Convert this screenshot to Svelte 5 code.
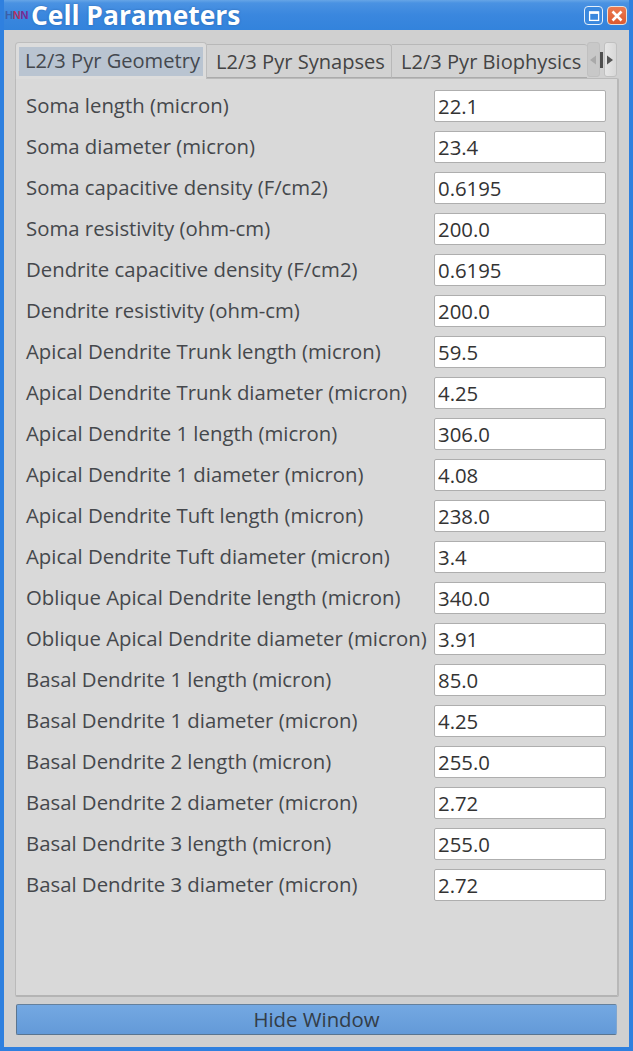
<script>
  const rows = [
    ["Soma length (micron)", "22.1"],
    ["Soma diameter (micron)", "23.4"],
    ["Soma capacitive density (F/cm2)", "0.6195"],
    ["Soma resistivity (ohm-cm)", "200.0"],
    ["Dendrite capacitive density (F/cm2)", "0.6195"],
    ["Dendrite resistivity (ohm-cm)", "200.0"],
    ["Apical Dendrite Trunk length (micron)", "59.5"],
    ["Apical Dendrite Trunk diameter (micron)", "4.25"],
    ["Apical Dendrite 1 length (micron)", "306.0"],
    ["Apical Dendrite 1 diameter (micron)", "4.08"],
    ["Apical Dendrite Tuft length (micron)", "238.0"],
    ["Apical Dendrite Tuft diameter (micron)", "3.4"],
    ["Oblique Apical Dendrite length (micron)", "340.0"],
    ["Oblique Apical Dendrite diameter (micron)", "3.91"],
    ["Basal Dendrite 1 length (micron)", "85.0"],
    ["Basal Dendrite 1 diameter (micron)", "4.25"],
    ["Basal Dendrite 2 length (micron)", "255.0"],
    ["Basal Dendrite 2 diameter (micron)", "2.72"],
    ["Basal Dendrite 3 length (micron)", "255.0"],
    ["Basal Dendrite 3 diameter (micron)", "2.72"]
  ];
</script>

<div class="window">
  <header class="titlebar">
    <div class="logo"><span class="l1">H</span><span class="l2">N</span><span class="l3">N</span></div>
    <div class="title">Cell Parameters</div>
    <div class="winbtns">
      <div class="wb max"><svg width="12" height="12" viewBox="0 0 12 12"><rect x="1.6" y="2" width="9" height="8.4" fill="none" stroke="#fff" stroke-width="1.3"/><rect x="1" y="1.5" width="10" height="2.4" fill="#fff"/></svg></div>
      <div class="wb close"><svg width="12" height="12" viewBox="0 0 12 12"><path d="M1.5 1.5 L10.5 10.5 M10.5 1.5 L1.5 10.5" stroke="#fff" stroke-width="2.6"/></svg></div>
    </div>
  </header>
  <main class="body">
    <div class="tabbar">
      <div class="tab active"><span class="tablabel">L2/3 Pyr Geometry</span></div>
      <div class="tab second">L2/3 Pyr Synapses</div>
      <div class="tab third">L2/3 Pyr Biophysics</div>
      <div class="scrollers">
        <div class="sc left"><svg width="8" height="10" viewBox="0 0 8 10"><path d="M7 0.5 V9.5 L1 5 Z" fill="#a9a9a9"/></svg></div>
        <div class="sep"></div>
        <div class="sc right"><svg width="8" height="10" viewBox="0 0 8 10"><path d="M1 0.5 V9.5 L7 5 Z" fill="#555"/></svg></div>
      </div>
    </div>
    <section class="pane">
      {#each rows as [label, value]}
        <div class="row">
          <span class="label">{label}</span>
          <input class="field" value={value} readonly />
        </div>
      {/each}
    </section>
    <button class="hide">Hide Window</button>
  </main>
</div>

<style>
  :global(body) { margin: 0; background: #2f7fd8; }
  .window {
    width: 633px; height: 1051px; box-sizing: border-box;
    display: flex; flex-direction: column;
    font-family: "Open Sans", sans-serif;
    background: #3584dc;
    border-left: 4px solid #2f80df; border-right: 4px solid #2f80df; border-bottom: 4px solid #2f80df;
    overflow: hidden;
  }
  .titlebar {
    height: 30px; flex: none; margin: 0 -4px;
    display: flex; align-items: center;
    background: linear-gradient(#66a5e6 0, #4a92e2 3px, #3a87de 15px, #3383dc 100%);
  }
  .logo { width: 22px; margin-left: 5px; margin-top: 1px; font: bold 11px/11px "Liberation Sans", sans-serif; letter-spacing: -0.2px; flex: none; }
  .l1 { color: #3b5fa8; } .l2 { color: #b03060; } .l3 { color: #7a2a90; }
  .title { margin-left: 4px; color: #fff; font-weight: bold; font-size: 26.4px; line-height: 30px; text-shadow: 0 0 2px rgba(20,60,120,.5); }
  .winbtns { margin-left: auto; margin-right: 6px; margin-top: 1px; display: flex; gap: 4px; }
  .wb { width: 19px; height: 19px; box-sizing: border-box; border: 1px solid #e4effa; border-radius: 4px; display: flex; align-items: center; justify-content: center; }
  .wb svg { flex: none; }
  .max { background: #3a88de; }
  .close { width: 20px; background: linear-gradient(#ec7a50, #dc5a30); border-color: #e8e0d8; }
  .body { flex: 1; background: #d0d0d0; padding: 11px 12px 0 11px; display: flex; flex-direction: column; min-height: 0; }
  .tabbar { display: flex; height: 37px; position: relative; z-index: 1; flex: none; align-items: flex-end; }
  .tab {
    height: 34px; box-sizing: border-box; font-size: 20.1px; line-height: 33px;
    padding: 0 6px 0 9px; border: 1px solid #b8b8b8; border-bottom: 1px solid #ababab; border-left: none;
    background: #d2d2d2; white-space: nowrap; flex: none; border-radius: 0 3px 0 0; color: #444;
  }
  .tab.active {
    width: 192px; height: 37px; border: 1px solid #bdbdbd; border-bottom: none; border-radius: 4px 4px 0 0;
    background: #dcdcdc; padding: 4px 3px 0 3px; line-height: 28px; margin-bottom: -1px;
  }
  .tablabel { display: block; background: #b9c4d1; height: 29px; padding: 0 0 0 6px; color: #44484e; }
  .tab.third { overflow: hidden; width: 195px; padding: 0 0 0 9px; border-right: none; }
  .scrollers { display: flex; height: 36px; flex: none; align-self: flex-end; }
  .sc { width: 13px; height: 35px; box-sizing: border-box; border: 1px solid #c0c0c0; border-radius: 3px; display: flex; align-items: center; justify-content: center; flex: none; }
  .left { background: #c8c8c8; }
  .right { background: linear-gradient(90deg, #e6e6e6, #d8d8d8); margin-left: 1px; }
  .sep { width: 3px; height: 16px; margin-top: 10px; background: #4e4e4e; flex: none; }
  .pane {
    flex: none; height: 919px; box-sizing: border-box; width: 604px;
    background: #d9d9d9;
    border: 1px solid #bababa; border-bottom: 2px solid #b4b4b4; border-right: 2px solid #b8b8b8; border-radius: 0 2px 2px 2px;
    padding: 11px 11px 0 10px;
    display: flex; flex-direction: column; gap: 9px;
  }
  .row { display: flex; align-items: center; height: 32px; flex: none; }
  .label { font-size: 20.35px; color: #45484c; width: 408px; flex: none; white-space: nowrap; line-height: 30px; padding-bottom: 2px; }
  .field {
    width: 172px; height: 32px; box-sizing: border-box; border: 1px solid #aeaeae; border-radius: 2px;
    background: #fff; font: 20.35px "Open Sans", sans-serif; color: #333; padding: 0 3px; outline: none;
    flex: none;
  }
  .hide {
    display: block; margin: 7px 0 0 1px; width: 601px; height: 31px; flex: none; box-sizing: border-box;
    border: 1px solid #5a7590; border-top-color: #64809c; border-right-color: #7fa6d0; border-radius: 2px;
    background: linear-gradient(#74a8e2, #639ad8);
    font: 20.35px "Open Sans", sans-serif; color: #333d48; padding: 0; line-height: 29px;
  }
</style>
